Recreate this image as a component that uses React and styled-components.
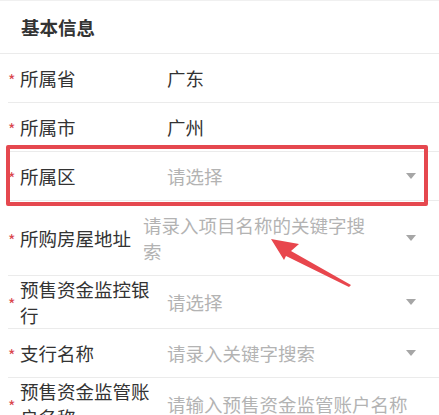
import React from "react";
import styled, { createGlobalStyle } from "styled-components";

const GlobalStyle = createGlobalStyle`
  html, body {
    margin: 0;
    padding: 0;
    background: #fff;
    overflow: hidden;
  }
  body {
    font-family: "Noto Sans CJK SC", "Noto Sans", sans-serif;
    color: #333;
  }
`;

const Page = styled.div`
  position: relative;
  width: 439px;
  height: 415px;
  overflow: hidden;
  border-top: 1px solid #f0f0f0;
  box-sizing: border-box;
`;

const Header = styled.div`
  height: 52px;
  line-height: 52px;
  padding-left: 21px;
  font-size: 18.5px;
  font-weight: 700;
  color: #333;
  border-bottom: 1px solid #ebebeb;
`;

const Row = styled.div`
  display: flex;
  align-items: center;
  margin-left: 8px;
  padding-right: 23px;
  border-bottom: 1px solid #ebebeb;
  font-size: 18.5px;
  line-height: 26px;
`;

const Star = styled.span`
  flex: 0 0 12px;
  color: #d9464e;
  font-size: 16px;
  line-height: 16px;
  padding-top: 4px;
`;

const Label = styled.div`
  flex: 0 0 ${(p) => (p.$auto ? "auto" : "135px")};
  margin-right: 12px;
  color: #333;
`;

const ValueBox = styled.div`
  flex: 1;
  min-width: 0;
  padding: 11px 0;
`;

const Value = styled.div`
  max-width: ${(p) => p.$max || "none"};
  word-break: break-all;
  color: ${(p) => (p.$empty ? "#b3b3b3" : "#333")};
`;

const Caret = styled.span`
  flex: 0 0 auto;
  margin-left: 24px;
  width: 0;
  height: 0;
  border-left: 5px solid transparent;
  border-right: 5px solid transparent;
  border-top: 6px solid #a6a6a6;
`;

const Highlight = styled.div`
  position: absolute;
  left: 6px;
  top: 144px;
  width: 414px;
  height: 53px;
  border: 4px solid #e5484f;
  border-radius: 2px;
  pointer-events: none;
`;

const ArrowSvg = styled.svg`
  position: absolute;
  left: 0;
  top: 0;
  pointer-events: none;
`;

const rows = [
  { label: "所属省", value: "广东" },
  { label: "所属市", value: "广州" },
  { label: "所属区", placeholder: "请选择", caret: true },
  {
    label: "所购房屋地址",
    placeholder: "请录入项目名称的关键字搜索",
    caret: true,
    auto: true,
    max: "230px",
  },
  { label: "预售资金监控银行", placeholder: "请选择", caret: true },
  { label: "支行名称", placeholder: "请录入关键字搜索", caret: true },
  { label: "预售资金监管账户名称", placeholder: "请输入预售资金监管账户名称" },
];

export default function App() {
  return (
    <>
      <GlobalStyle />
      <Page>
        <Header>基本信息</Header>
        {rows.map((r) => (
          <Row key={r.label}>
            <Star>*</Star>
            <Label $auto={r.auto}>{r.label}</Label>
            <ValueBox>
              <Value $empty={!r.value} $max={r.max}>
                {r.value || r.placeholder}
              </Value>
            </ValueBox>
            {r.caret && <Caret />}
          </Row>
        ))}
        <Highlight />
        <ArrowSvg width="439" height="415" viewBox="0 0 439 415">
          <polygon
            points="271,238 299,243 291,250 351,284 349,286 286,255 284,259"
            fill="#e8464d"
          />
        </ArrowSvg>
      </Page>
    </>
  );
}
